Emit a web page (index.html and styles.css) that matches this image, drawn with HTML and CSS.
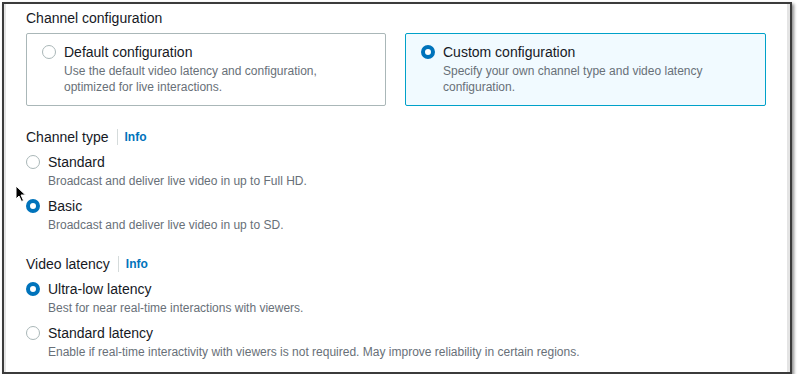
FILE: index.html
```html
<!DOCTYPE html>
<html lang="en">
<head>
    <meta charset="UTF-8">
    <meta name="viewport" content="width=device-width, initial-scale=1.0">
    <title>Channel configuration</title>
    <link rel="stylesheet" href="styles.css">
</head>
<body>
    <div class="frame">
        <div class="panel">
            <div class="section-title">Channel configuration</div>

            <div class="cards">
                <label class="card">
                    <span class="radio"></span>
                    <span class="option-text">
                        <span class="option-label">Default configuration</span>
                        <span class="option-desc">Use the default video latency and configuration,<br>optimized for live interactions.</span>
                    </span>
                </label>
                <label class="card selected">
                    <span class="radio checked"></span>
                    <span class="option-text">
                        <span class="option-label">Custom configuration</span>
                        <span class="option-desc">Specify your own channel type and video latency<br>configuration.</span>
                    </span>
                </label>
            </div>

            <div class="group">
                <div class="group-title">
                    <span>Channel type</span>
                    <span class="divider"></span>
                    <a href="#" class="info">Info</a>
                </div>
                <label class="option">
                    <span class="radio"></span>
                    <span class="option-text">
                        <span class="option-label">Standard</span>
                        <span class="option-desc">Broadcast and deliver live video in up to Full HD.</span>
                    </span>
                </label>
                <label class="option">
                    <span class="radio checked"></span>
                    <span class="option-text">
                        <span class="option-label">Basic</span>
                        <span class="option-desc">Broadcast and deliver live video in up to SD.</span>
                    </span>
                </label>
            </div>

            <div class="group">
                <div class="group-title">
                    <span>Video latency</span>
                    <span class="divider"></span>
                    <a href="#" class="info">Info</a>
                </div>
                <label class="option">
                    <span class="radio checked"></span>
                    <span class="option-text">
                        <span class="option-label">Ultra-low latency</span>
                        <span class="option-desc">Best for near real-time interactions with viewers.</span>
                    </span>
                </label>
                <label class="option">
                    <span class="radio"></span>
                    <span class="option-text">
                        <span class="option-label">Standard latency</span>
                        <span class="option-desc">Enable if real-time interactivity with viewers is not required. May improve reliability in certain regions.</span>
                    </span>
                </label>
            </div>
        </div>

        <svg class="cursor" width="12" height="18" viewBox="0 0 12 18">
            <path d="M1 1 L1 14 L4 11 L6.5 16.5 L8.5 15.5 L6 10 L10.5 10 Z" fill="#000" stroke="#fff" stroke-width="1"/>
        </svg>
    </div>
</body>
</html>
```

FILE: styles.css
```css
body {
    margin: 0;
    background: #fff;
    font-family: "Liberation Sans", Arial, sans-serif;
    color: #16191f;
}
.frame {
    position: relative;
    margin: 2px 0 0 2px;
    width: 786px;
    height: 368px;
    border: 2px solid #3b3b3b;
    box-shadow: 2px 2px 3px rgba(0,0,0,0.45);
    overflow: hidden;
}
.panel {
    height: 100%;
    box-sizing: border-box;
    border-left: 2px solid #e4e4e4;
    border-right: 3px solid #e4e4e4;
    padding: 4px 19px 0 20px;
}
.section-title {
    font-size: 14px;
    line-height: 20px;
}
.cards {
    display: grid;
    grid-template-columns: 360px 361px;
    gap: 19px;
    margin-top: 5px;
}
.card {
    display: flex;
    gap: 8px;
    height: 73px;
    box-sizing: border-box;
    padding: 8px 15px;
    border: 1px solid #aab7b8;
    border-radius: 2px;
}
.card.selected {
    border-color: #00a1c9;
    background: #f1faff;
}
.radio {
    flex: none;
    width: 14px;
    height: 14px;
    margin-top: 3px;
    box-sizing: border-box;
    border: 1.5px solid #aab7b8;
    border-radius: 50%;
    background: #fff;
}
.radio.checked {
    border: 4px solid #0073bb;
}
.option-text {
    display: flex;
    flex-direction: column;
}
.option-label {
    font-size: 14px;
    line-height: 20px;
}
.option-desc {
    font-size: 12px;
    line-height: 16px;
    color: #687078;
    margin-top: 1px;
}
.group {
    margin-top: 21px;
}
.group-title {
    display: flex;
    align-items: center;
    font-size: 14px;
    line-height: 20px;
    margin-bottom: 5px;
}
.divider {
    width: 1px;
    height: 16px;
    background: #d5dbdb;
    margin: 0 7px 0 8px;
}
.info {
    color: #0073bb;
    font-weight: bold;
    font-size: 12px;
    text-decoration: none;
}
.option {
    display: flex;
    gap: 8px;
    margin-bottom: 7px;
}
.cursor {
    position: absolute;
    left: 11px;
    top: 181px;
}
```
